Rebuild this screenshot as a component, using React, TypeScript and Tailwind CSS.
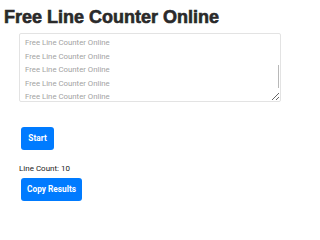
import * as React from "react"

const lines = Array.from({ length: 10 }, () => "Free Line Counter Online").join("\n")

export default function App() {
  return (
    <div className="min-h-screen bg-white pl-1 pt-1.5 font-['Roboto','Inter',sans-serif]">
      <h1 className="font-['Liberation_Sans',Arial,sans-serif] text-[18px] font-bold leading-[22px] text-[#2a2a2a] [-webkit-text-stroke:0.6px_#2a2a2a]">
        Free Line Counter Online
      </h1>

      <div className="relative ml-[15px] mt-[5px] h-[69px] w-[262px]">
        <textarea
          readOnly
          value={lines}
          className="block h-full w-full resize overflow-hidden rounded-[2px] border border-[#e3e3e3] px-[5px] pt-[2px] font-['Roboto',sans-serif] text-[7.8px] leading-[13.5px] text-[#a3a3a3] outline-none"
        />
        <div className="absolute right-[2px] top-[32px] h-[23px] w-[1.5px] bg-[#b8b8b8]" />
      </div>

      <button className="ml-[17px] mt-[25px] block h-[23px] w-[33px] rounded-[3px] bg-[#007bff] text-[8.3px] font-bold text-white">
        Start
      </button>

      <p className="ml-[15px] mt-[14px] text-[8px] leading-[10px] text-[#222]">Line Count: 10</p>

      <button className="ml-[17px] mt-[4px] block h-[23px] w-[61px] rounded-[3px] bg-[#007bff] text-[8.3px] font-bold text-white">
        Copy Results
      </button>
    </div>
  )
}
